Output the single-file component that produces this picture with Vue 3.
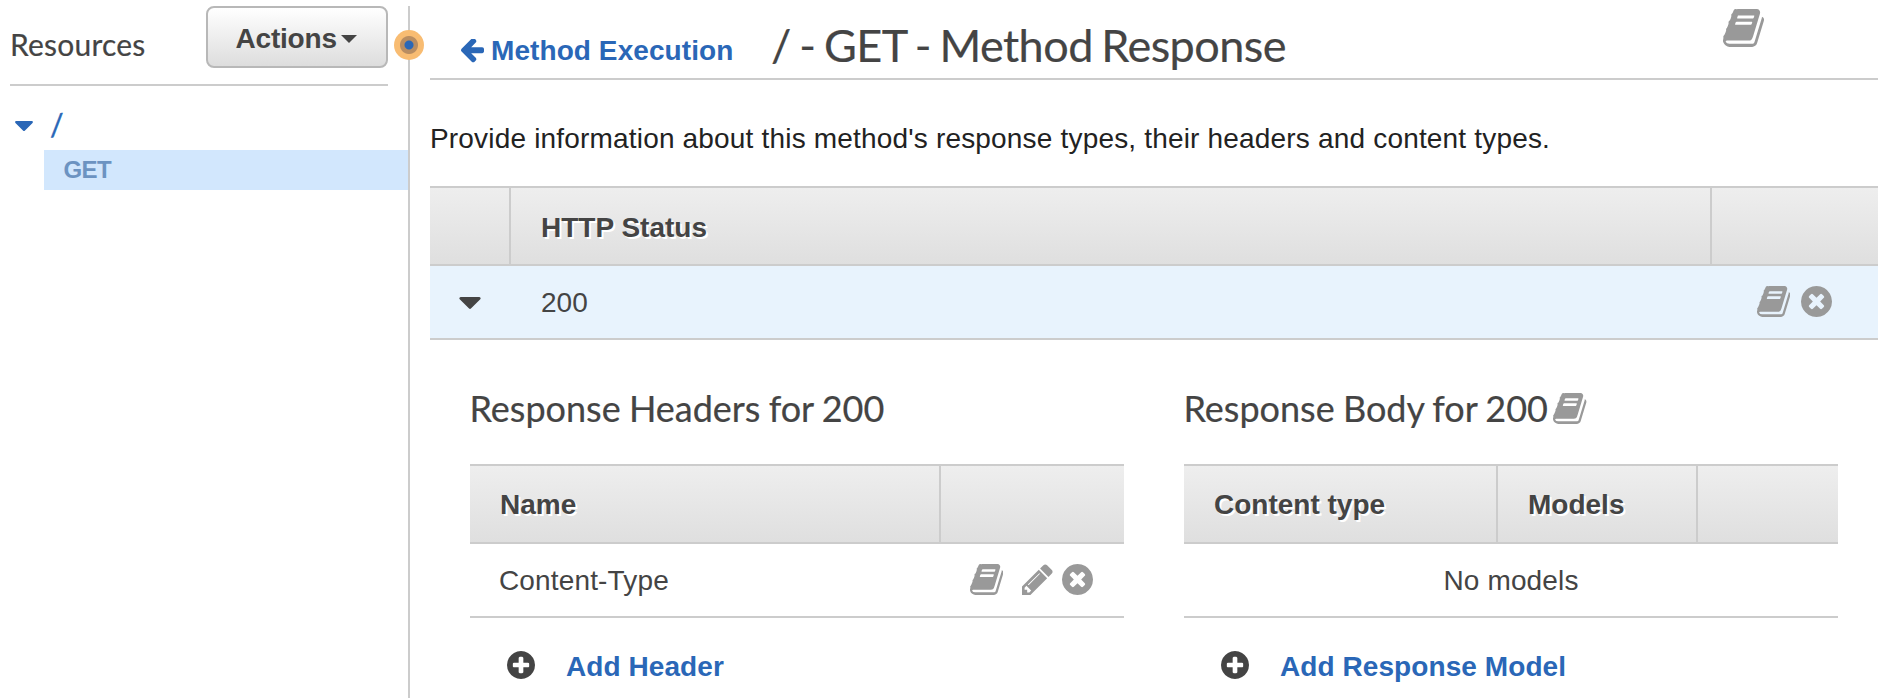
<script setup>
import { h } from 'vue'

const disc = 'm387-226q0 209-103 385.500t-279.500 279.500-385.500 103-385.500-103-279.500-279.500-103-385.500 103-385.500 279.500-279.500 385.500-103 385.500 103 279.500 279.500 103 385.500z'

const glyphs = {
  book: {
    box: '0 128 1664 1536',
    d: 'M1639 478q40 57 18 129l-275 906q-19 64-76.500 107.500t-122.500 43.500h-923q-77 0-148.500-53.500t-99.500-131.500q-24-67-2-127 0-4 3-27t4-37q1-8-3-21.500t-3-19.500q2-11 8-21t16.500-23.500 16.500-23.500q23-38 45-91.500t30-91.500q3-10 .5-30t-.5-28q3-11 17-28t17-23q21-36 42-92t25-90q1-9-2.500-32t.5-28q4-13 22-30.500t22-22.500q19-26 42.500-84.500t27.500-96.500q1-8-3-25.500t-2-26.500q2-8 9-18t18-23 17-21q8-12 16.500-30.500t15-35 16-36 19.500-32 26.500-23.500 36-11.500 47.500 5.500l-1 3q38-9 51-9h761q74 0 114 56t18 130l-274 906q-36 119-71.500 153.500t-128.500 34.500h-869q-27 0-38 15-11 16-1 43 24 70 144 70h923q29 0 56-15.500t35-41.500l300-987q7-22 5-57 38 15 59 43zm-1064 2q-4 13 2 22.500t20 9.500h608q13 0 25.500-9.500t16.500-22.500l21-64q4-13-2-22.500t-20-9.500h-608q-13 0-25.500 9.500t-16.500 22.500zm-83 256q-4 13 2 22.500t20 9.500h608q13 0 25.500-9.500t16.500-22.500l21-64q4-13-2-22.500t-20-9.500h-608q-13 0-25.500 9.500t-16.500 22.500z',
  },
  remove: {
    box: '128 128 1536 1536',
    d: 'M1277 1122q0-26-19-45l-181-181 181-181q19-19 19-45 0-27-19-46l-90-90q-19-19-46-19-26 0-45 19l-181 181-181-181q-19-19-45-19-27 0-46 19l-90 90q-19 19-19 46 0 26 19 45l181 181-181 181q-19 19-19 45 0 27 19 46l90 90q19 19 46 19 26 0 45-19l181-181 181 181q19 19 45 19 27 0 46-19l90-90q19-19 19-46z' + disc,
  },
  add: {
    box: '128 128 1536 1536',
    d: 'M1344 960v-128q0-26-19-45t-45-19h-256v-256q0-26-19-45t-45-19h-128q-26 0-45 19t-19 45v256h-256q-26 0-45 19t-19 45v128q0 26 19 45t45 19h256v256q0 26 19 45t45 19h128q26 0 45-19t19-45v-256h256q26 0 45-19t19-45zm320-64q0 209-103 385.500t-279.500 279.500-385.500 103-385.500-103-279.500-279.500-103-385.500 103-385.500 279.500-279.500 385.500-103 385.500 103 279.500 279.500 103 385.500z',
  },
  pencil: {
    box: '128 128 1536 1536',
    d: 'M491 1536l91-91-235-235-91 91v107h128v128h107zm523-928q0-22-22-22-10 0-17 7l-542 542q-7 7-7 17 0 22 22 22 10 0 17-7l542-542q7-7 7-17zm-54-192l416 416-832 832h-416v-416zm683 96q0 53-37 90l-166 166-416-416 166-165q36-38 90-38 53 0 91 38l235 234q37 39 37 91z',
  },
  back: {
    box: '192 270 1472 1490',
    d: 'M1664 896v128q0 53-32.500 90.500t-84.500 37.500h-704l293 294q38 36 38 90t-38 90l-75 76q-37 37-90 37-52 0-91-37l-651-652q-37-37-37-90 0-52 37-91l651-650q38-38 91-38 52 0 90 38l75 74q38 38 38 91t-38 91l-293 293h704q52 0 84.500 37.500t32.500 90.500z',
  },
  caret: {
    box: '384 640 1024 576',
    d: 'M1408 704q0 26-19 45l-448 448q-19 19-45 19t-45-19l-448-448q-19-19-19-45t19-45 45-19h896q26 0 45 19t19 45z',
  },
}

const Icon = (props) =>
  h('svg', { viewBox: glyphs[props.name].box, fill: 'currentColor', 'aria-hidden': 'true' }, [
    h('path', { d: glyphs[props.name].d }),
  ])
Icon.props = ['name']
</script>

<template>
  <div class="page">
    <aside class="sidebar">
      <header class="side-head">
        <h2 class="side-title">Resources</h2>
        <button class="actions" type="button"><span>Actions</span><i class="drop"></i></button>
      </header>
      <div class="root"><Icon name="caret" class="root-caret" /><span class="slash">/</span></div>
      <div class="method"><span>GET</span></div>
      <div class="handle"></div>
    </aside>

    <main class="main">
      <header class="head">
        <a class="back"><Icon name="back" class="back-icon" /><span>Method Execution</span></a>
        <h1 class="title">/ - GET - Method Response</h1>
        <Icon name="book" class="head-book" />
      </header>

      <p class="intro"><span>Provide information about this method's response types, their headers and content types.</span></p>

      <div class="bar status-cols">
        <div class="cell"></div>
        <div class="cell"><span>HTTP Status</span></div>
        <div class="cell"></div>
      </div>
      <div class="row open status-cols">
        <div class="toggle"><Icon name="caret" class="row-caret" /></div>
        <div class="value"><span>200</span></div>
        <div class="tools"><Icon name="book" class="book" /><Icon name="remove" class="remove" /></div>
      </div>

      <div class="details">
        <section>
          <h3 class="subtitle"><span>Response Headers for 200</span></h3>
          <div class="bar header-cols">
            <div class="cell"><span>Name</span></div>
            <div class="cell"></div>
          </div>
          <div class="row header-cols">
            <div class="value"><span>Content-Type</span></div>
            <div class="tools">
              <Icon name="book" class="book" /><Icon name="pencil" class="pencil" /><Icon name="remove" class="remove" />
            </div>
          </div>
          <div class="add"><Icon name="add" class="add-icon" /><a>Add Header</a></div>
        </section>

        <section>
          <h3 class="subtitle"><span>Response Body for 200</span><Icon name="book" class="book" /></h3>
          <div class="bar body-cols">
            <div class="cell"><span>Content type</span></div>
            <div class="cell"><span>Models</span></div>
            <div class="cell"></div>
          </div>
          <div class="row empty"><span>No models</span></div>
          <div class="add"><Icon name="add" class="add-icon" /><a>Add Response Model</a></div>
        </section>
      </div>
    </main>
  </div>
</template>

<style>
body {
  background: #fff;
  overflow: hidden;
}
</style>

<style scoped>
* {
  box-sizing: border-box;
}
.page {
  display: flex;
  height: 698px;
  overflow: hidden;
  font: 28px/32px 'Liberation Sans', Arial, sans-serif;
  color: #444;
  white-space: nowrap;
}
svg {
  display: block;
  flex: none;
}
h1,
h2,
h3 {
  margin: 0;
  font-family: Lato, sans-serif;
  font-weight: 400;
  -webkit-text-stroke: 0.2px currentColor;
}

.sidebar {
  position: relative;
  flex: none;
  width: 410px;
  margin-top: 6px;
  border-right: 2px solid #ccc;
}
.side-head {
  display: flex;
  justify-content: space-between;
  width: 378px;
  height: 80px;
  margin-left: 10px;
  border-bottom: 2px solid #ccc;
}
.side-title {
  padding-top: 20px;
  font-size: 30px;
  line-height: 36px;
  letter-spacing: 0.2px;
}
.actions {
  display: flex;
  align-items: center;
  width: 182px;
  height: 62px;
  padding: 3px 0 0 27.5px;
  border: 2px solid #b8b8b8;
  border-radius: 8px;
  background: linear-gradient(#fff, #ddd);
  color: #444;
  font: bold 28px/32px 'Liberation Sans', Arial, sans-serif;
  letter-spacing: -0.2px;
}
.drop {
  margin: 1px 0 0 4px;
  border: 8px solid transparent;
  border-top-color: #444;
  border-bottom: 0;
}
.root {
  display: flex;
  align-items: center;
  height: 64px;
  padding: 14px 0 0 15px;
  color: #2a67b7;
}
.root-caret {
  width: 18px;
  height: 10px;
  margin-top: 1px;
}
.slash {
  margin: -2px 0 0 17px;
  font-family: Lato, sans-serif;
  font-size: 30px;
  -webkit-text-stroke: 0.4px currentColor;
}
.method {
  height: 40px;
  margin-left: 44px;
  padding-left: 19.5px;
  background: #d2e7fd;
  color: #6c93c1;
  font-size: 24px;
  font-weight: bold;
  line-height: 39px;
  letter-spacing: -0.6px;
}
.handle {
  position: absolute;
  top: 24px;
  right: -16px;
  width: 30px;
  height: 30px;
  border-radius: 50%;
  background: radial-gradient(circle, #2a67b7 4px, #b98d61 5px, #b98d61 8.5px, #f8bc72 9.5px);
}

.main {
  width: 1448px;
  margin-left: 20px;
}
.head {
  display: flex;
  height: 80px;
  border-bottom: 2px solid #ccc;
}
.back {
  display: flex;
  width: 341px;
  padding: 35px 0 0 31px;
  color: #2a67b7;
  font-weight: bold;
  letter-spacing: 0.08px;
}
.back-icon {
  width: 23px;
  height: 24px;
  margin: 4px 7px 0 0;
}
.title {
  width: 952px;
  padding-top: 18px;
  font-size: 45px;
  line-height: 54px;
  letter-spacing: -0.55px;
  word-spacing: -2.5px;
}
.head-book {
  width: 41px;
  height: 38px;
  margin: 9px 0 0;
  color: #999;
}
.intro {
  height: 106px;
  margin: 0;
  padding-top: 43px;
  color: #222;
  letter-spacing: 0.18px;
}

.bar,
.row {
  display: grid;
  border-bottom: 2px solid #ccc;
}
.bar {
  height: 80px;
  border-top: 2px solid #ccc;
  background: linear-gradient(#eee, #dfdfdf);
  font-weight: bold;
  text-shadow: 2px 2px 0 #fff;
}
.row {
  height: 74px;
}
.status-cols {
  grid-template-columns: 81px 1201px 1fr;
}
.header-cols {
  grid-template-columns: 471px 1fr;
}
.body-cols {
  grid-template-columns: 314px 200px 1fr;
}
.cell {
  padding: 24px 0 0 30px;
}
.details .cell {
  padding-top: 23px;
}
.cell:not(:last-child) {
  border-right: 2px solid #ccc;
}
.open {
  background: #e8f3fd;
}
.toggle {
  padding: 31px 0 0 29px;
}
.row-caret {
  width: 22px;
  height: 12px;
}
.value {
  padding: 21px 0 0 30px;
}
.details .value {
  padding-left: 29px;
  letter-spacing: 0.15px;
}
.tools {
  display: flex;
  padding-top: 19.5px;
  color: #999;
}
.status-cols .tools {
  padding-left: 45px;
}
.header-cols .tools {
  padding: 19.7px 0 0 29px;
}
.book {
  width: 33.4px;
  height: 31px;
  color: #999;
}
.remove,
.pencil {
  width: 31px;
  height: 31px;
}
.remove {
  margin-left: 10.6px;
}
.pencil {
  margin-left: 18.6px;
}
.pencil + .remove {
  margin-left: 9px;
}
.empty {
  padding: 21px 0 0;
  justify-content: center;
  letter-spacing: 0.15px;
}

.details {
  display: grid;
  grid-template-columns: 654px 654px;
  gap: 60px;
  padding-left: 40px;
}
.subtitle {
  display: flex;
  height: 124px;
  padding-top: 46px;
  font-size: 36px;
  line-height: 44px;
  word-spacing: -1px;
}
.subtitle span {
  margin-left: -0.6px;
}
.subtitle .book {
  margin: 7px 0 0 5.5px;
}
.add {
  display: flex;
  height: 80px;
  padding: 33px 0 0 37.3px;
}
.add-icon {
  width: 28px;
  height: 28px;
  margin-top: -0.3px;
}
.add a {
  margin-left: 30.7px;
  color: #2a67b7;
  font-weight: bold;
  letter-spacing: 0.08px;
}
</style>
